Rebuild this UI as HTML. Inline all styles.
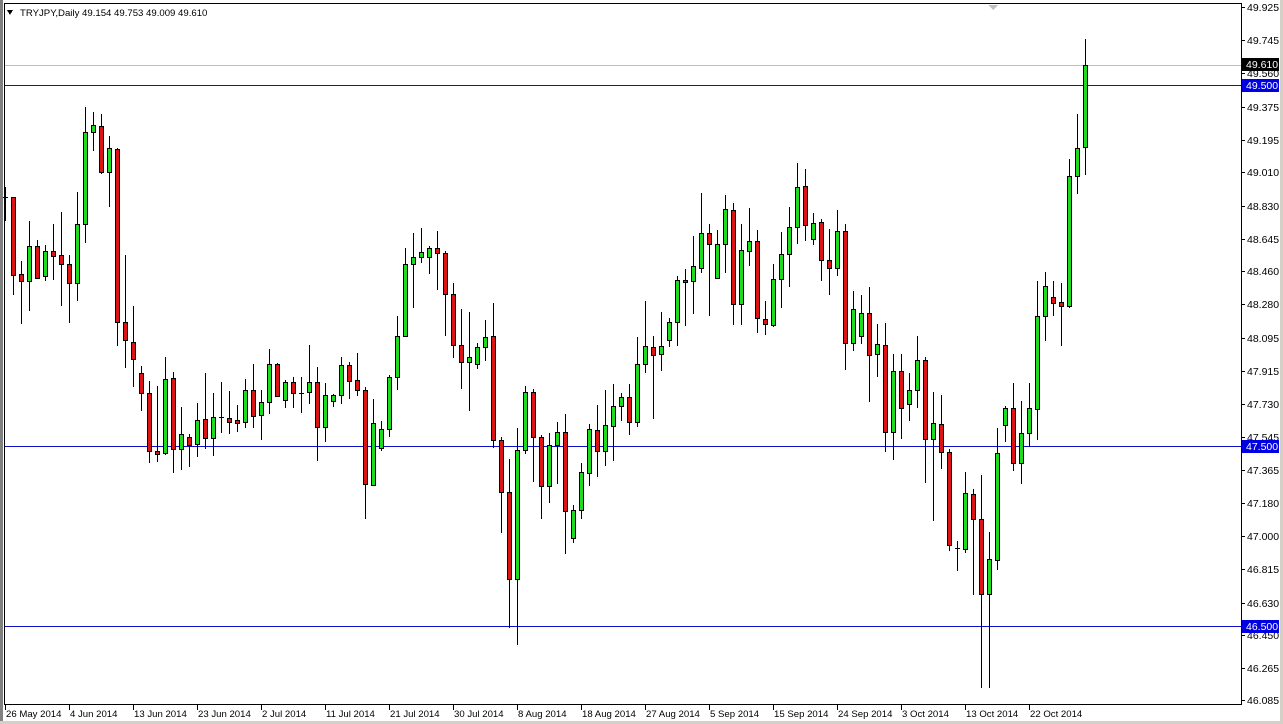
<!DOCTYPE html>
<html><head><meta charset="utf-8"><style>
html,body{margin:0;padding:0;background:#fff;overflow:hidden}
svg{display:block;font-family:"Liberation Sans",sans-serif}
</style></head><body>
<svg id="s" width="1283" height="724" viewBox="0 0 1283 724" xmlns="http://www.w3.org/2000/svg" shape-rendering="crispEdges">
<rect x="0" y="0" width="1283" height="724" fill="#fff"/>
<rect x="0" y="0" width="3" height="724" fill="#808080"/>
<rect x="1280" y="0" width="3" height="724" fill="#d4d0c8"/>
<rect x="0" y="721" width="1283" height="3" fill="#d4d0c8"/>
<rect x="4.5" y="3.5" width="1237" height="701" fill="none" stroke="#000"/>
<line x1="5" y1="65.5" x2="1241" y2="65.5" stroke="#c0c0c0"/>
<rect x="5" y="85" width="1236" height="1" fill="#1010c8"/>
<rect x="5" y="446" width="1236" height="1" fill="#1010c8"/>
<rect x="5" y="626" width="1236" height="1" fill="#1010c8"/>
<polygon points="988,5 998,5 993,10" fill="#c0c0c0"/>
<g id="c"></g>
<polygon points="7,10 13,10 10,15" fill="#000"/>
<text x="20" y="16" font-size="9.6" fill="#000">TRYJPY,Daily  49.154 49.753 49.009 49.610</text>
<g id="ax" font-size="10.5" fill="#000"></g>
<g id="dx" font-size="9.6" fill="#000"></g>
<rect x="1242" y="58" width="37" height="13" fill="#000"/>
<text x="1246" y="68" font-size="10.5" fill="#fff">49.610</text>
<rect x="1242" y="79" width="37" height="13" fill="#0000e0"/>
<text x="1246" y="89" font-size="10.5" fill="#fff">49.500</text>
<rect x="1242" y="440" width="37" height="13" fill="#0000e0"/>
<text x="1246" y="450" font-size="10.5" fill="#fff">47.500</text>
<rect x="1242" y="620" width="37" height="13" fill="#0000e0"/>
<text x="1246" y="630" font-size="10.5" fill="#fff">46.500</text>
</svg>
<script>
var NS="http://www.w3.org/2000/svg";
function el(p,n,a,t){var e=document.createElementNS(NS,n);for(var k in a)e.setAttribute(k,a[k]);if(t)e.textContent=t;p.appendChild(e);return e;}
var D=[
['d',197,199,187,220],['r',197,275,197,294],['r',274,281,261,323],['g',246,281,221,310],['r',246,278,240,278],
['g',251,276,245,280],['r',251,256,224,279],['r',255,264,212,305],['r',264,283,255,322],['g',224,283,192,300],
['g',132,224,107,242],['g',125,132,112,150],['r',126,172,114,173],['g',148,172,136,206],['r',149,322,148,345],
['r',322,340,255,367],['r',342,359,306,386],['r',373,393,366,410],['r',393,451,381,462],['r',451,454,386,461],
['g',379,453,357,454],['r',378,449,372,472],['g',434,449,407,469],['r',437,445,434,466],['g',420,444,403,456],
['r',419,438,373,448],['g',417,438,393,455],['d',417,417,382,432],['r',418,422,391,433],['r',420,423,405,431],
['g',390,422,379,427],['r',390,416,364,427],['g',402,415,390,439],['g',364,402,349,413],['r',364,396,363,396],
['g',382,400,380,407],['r',382,393,377,407],['d',393,393,377,412],['g',382,392,345,403],['r',382,427,367,460],
['g',395,427,383,441],['g',395,401,394,406],['g',365,395,357,403],['r',365,381,362,398],['r',380,390,353,395],
['r',390,484,387,518],['g',423,485,399,485],['g',429,448,421,450],['g',377,429,375,436],['g',336,377,316,389],
['g',264,336,248,336],['g',257,264,233,307],['g',252,257,228,262],['g',248,257,246,273],['r',248,253,231,289],
['r',253,294,251,335],['r',294,345,283,357],['r',345,362,309,388],['g',357,362,312,410],['g',347,364,343,368],
['g',337,347,320,360],['r',336,440,303,447],['r',440,492,437,532],['r',492,579,459,627],['g',450,579,428,644],
['g',392,450,386,453],['r',392,437,389,481],['r',437,486,435,518],['g',445,486,433,502],['g',432,445,422,483],
['r',432,511,414,553],['g',510,538,505,542],['g',472,510,463,518],['g',429,473,424,485],['r',430,451,405,476],
['g',425,451,390,465],['g',406,426,384,460],['g',397,406,393,420],['r',397,422,384,434],['g',364,422,337,426],
['g',346,364,301,372],['r',347,355,336,418],['g',346,354,312,370],['g',322,340,318,346],['g',280,322,276,345],
['r',280,282,269,325],['g',266,281,236,313],['g',233,268,193,272],['r',233,244,224,315],['g',244,278,230,278],
['g',209,244,195,272],['r',210,304,203,324],['g',250,304,224,324],['g',241,251,208,265],['r',241,318,230,332],
['r',319,324,301,334],['g',279,325,264,326],['g',254,279,232,307],['g',227,254,207,286],['g',187,227,163,243],
['r',186,225,169,240],['g',223,239,213,244],['r',222,260,219,280],['r',260,268,229,294],['g',231,268,210,275],
['r',231,343,224,369],['g',309,343,291,350],['g',313,336,295,343],['r',313,355,287,401],['g',344,354,324,376],
['r',345,432,323,451],['g',371,432,354,459],['r',371,408,354,438],['g',390,404,373,420],['g',360,390,336,407],
['r',360,439,357,482],['g',423,439,392,520],['r',424,452,395,468],['r',452,545,449,550],['d',548,548,541,570],
['g',493,549,472,552],['r',494,519,489,594],['r',519,594,475,687],['g',559,594,532,687],['g',453,560,428,569],
['g',408,425,406,441],['r',408,463,383,470],['g',433,463,401,483],['g',408,433,383,446],['g',316,409,281,439],
['g',286,316,272,340],['r',297,303,281,315],['r',302,306,283,345],['g',176,306,159,307],['g',148,176,114,193],
['g',65,147,39,174]];
var g=document.getElementById('c');
D.forEach(function(d,i){
 var x=5+8*i;
 el(g,'line',{x1:x+.5,y1:d[3],x2:x+.5,y2:d[4]+1,stroke:'#000'});
 if(d[0]=='d'){el(g,'line',{x1:x-2,y1:d[1]+.5,x2:x+3,y2:d[1]+.5,stroke:'#000'});}
 else{var h=Math.max(d[2]-d[1],2);el(g,'rect',{x:x-1.5,y:d[1]+.5,width:4,height:h,fill:d[0]=='g'?'#1edc1e':'#dc1414',stroke:'#000'});}
});
var ax=document.getElementById('ax');
var L=['49.925','49.745','49.560','49.375','49.195','49.010','48.830','48.645','48.460','48.280','48.095','47.915','47.730','47.545','47.365','47.180','47.000','46.815','46.630','46.450','46.265','46.085'];
var Y=[7,40,73,107,140,172,206,239,271,304,338,371,404,437,470,503,536,569,603,635,668,700];
L.forEach(function(t,i){el(ax,'line',{x1:1242,y1:Y[i]+.5,x2:1245,y2:Y[i]+.5,stroke:'#000'});el(ax,'text',{x:1247,y:Y[i]+4},t);});
var dx=document.getElementById('dx');
var DT=['26 May 2014','4 Jun 2014','13 Jun 2014','23 Jun 2014','2 Jul 2014','11 Jul 2014','21 Jul 2014','30 Jul 2014','8 Aug 2014','18 Aug 2014','27 Aug 2014','5 Sep 2014','15 Sep 2014','24 Sep 2014','3 Oct 2014','13 Oct 2014','22 Oct 2014'];
DT.forEach(function(t,i){var x=5+64*i;el(dx,'line',{x1:x+.5,y1:705,x2:x+.5,y2:710,stroke:'#000'});el(dx,'text',{x:x+1,y:717},t);});
</script>
</body></html>
